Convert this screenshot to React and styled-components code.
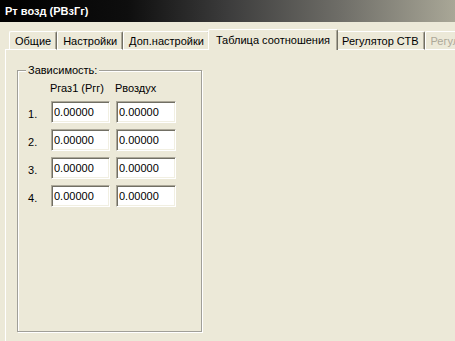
import React from "react";
import styled, { createGlobalStyle } from "styled-components";

const Global = createGlobalStyle`
  html, body { margin: 0; padding: 0; background: #ece9d8; }
  * { box-sizing: border-box; }
`;

const Window = styled.div`
  width: 455px;
  height: 341px;
  overflow: hidden;
  background: #ece9d8;
  font-family: "Liberation Sans", Arial, sans-serif;
  font-size: 11px;
  color: #000;
`;

const TitleBar = styled.div`
  height: 22px;
  display: flex;
  align-items: center;
  padding-left: 5px;
  padding-bottom: 1px;
  color: #fff;
  font-weight: bold;
  font-size: 11px;
  background: linear-gradient(to right, #000 0%, #0e0e0e 28%, #3c3c3c 50%, #6f6e68 75%, #a9a797 100%);
`;

const Body = styled.div`
  padding: 7px 0 0 5px;
`;

const TabStrip = styled.div`
  display: flex;
  align-items: flex-end;
  height: 21px;
  padding-left: 4px;
  margin-bottom: -1px;
  position: relative;
  z-index: 1;
  white-space: nowrap;
`;

const Tab = styled.div`
  flex: none;
  height: ${(p) => (p.$active ? 21 : 19)}px;
  padding: 0 ${(p) => (p.$active ? 7 : 5)}px;
  margin: 0 ${(p) => (p.$active ? -2 : 0)}px;
  display: flex;
  align-items: center;
  padding-top: ${(p) => (p.$active ? 0 : 1)}px;
  background: #ece9d8;
  border-top: 1px solid #fff;
  border-left: 1px solid #fff;
  border-right: 1px solid #716f64;
  box-shadow: inset -1px 0 0 #aca899;
  border-radius: 2px 2px 0 0;
  color: ${(p) => (p.$disabled ? "#aca899" : "#000")};
  position: relative;
  z-index: ${(p) => (p.$active ? 2 : 1)};
  ${(p) => (p.$active ? "" : "border-bottom: 1px solid #fff;")}
`;

const Panel = styled.div`
  border-top: 1px solid #fff;
  border-left: 1px solid #fff;
  height: 300px;
  padding: 20px 0 0 11px;
`;

const GroupBox = styled.div`
  position: relative;
  width: 185px;
  height: 262px;
  border: 1px solid #a09f98;
  box-shadow: 1px 1px 0 #fff, inset 1px 1px 0 #fff;
  padding: 10px 0 0 10px;
`;

const Legend = styled.span`
  position: absolute;
  top: -7px;
  left: 8px;
  padding: 0 2px;
  background: #ece9d8;
  line-height: 13px;
`;

const Grid = styled.div`
  display: grid;
  grid-template-columns: 17px 59px 60px;
  column-gap: 6px;
  row-gap: 6px;
  grid-auto-rows: 22px;
  grid-template-rows: 14px;
`;

const Header = styled.div`
  line-height: 14px;
  margin-left: -1px;
  white-space: nowrap;
`;

const RowLabel = styled.div`
  display: flex;
  align-items: flex-end;
  padding-bottom: 2px;
  line-height: 14px;
`;

const Field = styled.input`
  width: 100%;
  height: 22px;
  margin: 0;
  padding: 0 0 0 2px;
  font: inherit;
  color: #000;
  background: #fff;
  border-style: solid;
  border-width: 1px;
  border-color: #aca899 #fff #fff #aca899;
  box-shadow: inset 1px 1px 0 #716f64, inset -1px -1px 0 #f1efe2;
  outline: none;
`;

const tabs = [
  { label: "Общие" },
  { label: "Настройки" },
  { label: "Доп.настройки" },
  { label: "Таблица соотношения", active: true },
  { label: "Регулятор СТВ" },
  { label: "Регулятор", disabled: true },
];

const rows = [1, 2, 3, 4];

export default function App() {
  return (
    <Window>
      <Global />
      <TitleBar>Рт возд (РВзГг)</TitleBar>
      <Body>
        <TabStrip>
          {tabs.map((t) => (
            <Tab key={t.label} $active={t.active} $disabled={t.disabled}>
              {t.label}
            </Tab>
          ))}
        </TabStrip>
        <Panel>
          <GroupBox>
            <Legend>Зависимость:</Legend>
            <Grid>
              <div />
              <Header>Ргаз1 (Ргг)</Header>
              <Header>Рвоздух</Header>
              {rows.map((n) => (
                <React.Fragment key={n}>
                  <RowLabel>{n}.</RowLabel>
                  <Field readOnly value="0.00000" />
                  <Field readOnly value="0.00000" />
                </React.Fragment>
              ))}
            </Grid>
          </GroupBox>
        </Panel>
      </Body>
    </Window>
  );
}
